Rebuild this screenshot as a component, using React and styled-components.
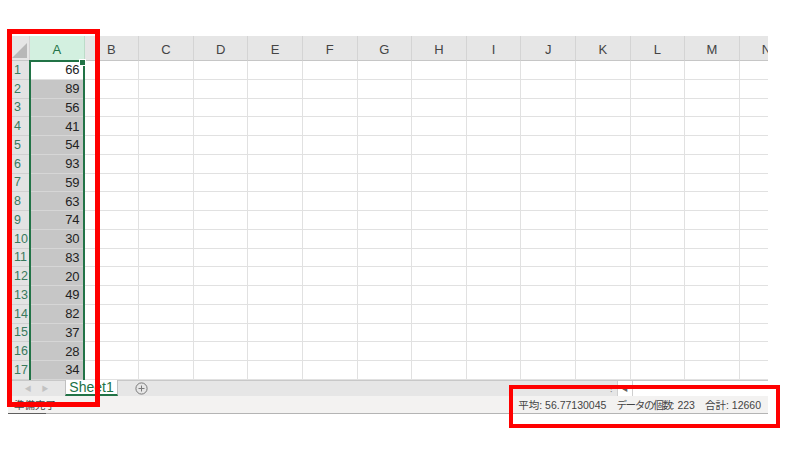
import React from "react";
import styled, { createGlobalStyle } from "styled-components";

const GlobalStyle = createGlobalStyle`
  html, body {
    margin: 0;
    padding: 0;
    background: #ffffff;
  }
  body {
    font-family: "Liberation Sans", "Noto Sans CJK JP", sans-serif;
    color: #222222;
  }
`;

const COLS = ["A", "B", "C", "D", "E", "F", "G", "H", "I", "J", "K", "L", "M", "N"];
const VALUES = [66, 89, 56, 41, 54, 93, 59, 63, 74, 30, 83, 20, 49, 82, 37, 28, 34];
const COL_W = 54.6;
const ROW_H = 18.76;

const Page = styled.div`
  position: relative;
  width: 800px;
  height: 450px;
  padding: 36px 0 0 8px;
  box-sizing: border-box;
`;

const Workbook = styled.div`
  width: 760px;
  display: flex;
  flex-direction: column;
`;

const Grid = styled.div`
  position: relative;
  display: grid;
  grid-template-columns: 22px repeat(14, ${COL_W}px);
  grid-template-rows: 25px repeat(17, ${ROW_H}px);
  width: 760px;
  overflow: hidden;
`;

const Corner = styled.div`
  background: #e6e6e6;
  border-right: 1px solid #d4d4d4;
  border-bottom: 1px solid #c6c6c6;
  display: flex;
  align-items: flex-end;
  justify-content: flex-end;
  padding: 0 2px 2px 0;
  box-sizing: border-box;
`;

const CornerTriangle = styled.div`
  width: 0;
  height: 0;
  border-left: 15px solid transparent;
  border-bottom: 15px solid #b8b8b8;
`;

const ColHead = styled.div`
  background: ${({ active }) => (active ? "#d3f0e0" : "#e6e6e6")};
  color: ${({ active }) => (active ? "#217346" : "#444444")};
  border-right: 1px solid ${({ active }) => (active ? "#bcdcc9" : "#d4d4d4")};
  border-bottom: 1px solid ${({ active }) => (active ? "#9fcbb0" : "#c6c6c6")};
  box-sizing: border-box;
  display: flex;
  align-items: center;
  justify-content: center;
  font-size: 13px;
  padding-top: 3px;
`;

const RowHead = styled.div`
  background: #e3e3e3;
  color: #3a7a5e;
  border-right: 1px solid #c6c6c6;
  border-bottom: 1px solid #d0d0d0;
  box-sizing: border-box;
  display: flex;
  align-items: center;
  padding-left: 6px;
  font-size: 12.5px;
  overflow: hidden;
`;

const Cell = styled.div`
  background: ${({ selected }) => (selected ? "#c6c6c6" : "#ffffff")};
  border-right: 1px solid #e1e1e1;
  border-bottom: 1px solid ${({ selected }) => (selected ? "#d6d6d6" : "#e1e1e1")};
  box-sizing: border-box;
  display: flex;
  align-items: center;
  justify-content: flex-end;
  padding-right: 4px;
  font-size: 13px;
  color: #222222;
`;

const Selection = styled.div`
  position: absolute;
  left: 21px;
  top: 24px;
  width: ${COL_W + 1}px;
  height: ${ROW_H * 17 + 4}px;
  border: 2px solid #217346;
  box-sizing: border-box;
  pointer-events: none;
`;

const FillHandle = styled.div`
  position: absolute;
  right: -3px;
  top: -3px;
  width: 5px;
  height: 5px;
  background: #217346;
  border: 1px solid #ffffff;
`;

const TabBar = styled.div`
  height: 15px;
  display: flex;
  align-items: stretch;
  background: #e6e6e6;
  border-top: 1px solid #c8c8c8;
`;

const NavArrows = styled.div`
  width: 57px;
  display: flex;
  align-items: center;
  justify-content: center;
  gap: 10px;
  color: #c2c2c2;
  font-size: 7px;
`;

const SheetTab = styled.div`
  width: 51px;
  background: #ffffff;
  color: #217346;
  font-size: 14px;
  display: flex;
  align-items: center;
  justify-content: center;
  border-left: 1px solid #c0c0c0;
  border-right: 1px solid #c0c0c0;
  border-bottom: 2px solid #217346;
  margin-top: -1px;
  line-height: 1;
`;

const AddButton = styled.div`
  width: 46px;
  display: flex;
  align-items: center;
  justify-content: center;
`;

const Spacer = styled.div`
  flex: 1;
`;

const SplitDots = styled.div`
  width: 12px;
  color: #8a8a8a;
  font-size: 9px;
  display: flex;
  align-items: center;
  justify-content: center;
`;

const ScrollTrack = styled.div`
  width: 150px;
  display: flex;
  background: #ffffff;
  border-left: 1px solid #cfcfcf;
`;

const ScrollArrow = styled.div`
  width: 14px;
  border-right: 1px solid #cfcfcf;
  display: flex;
  align-items: center;
  justify-content: center;
  color: #606060;
  font-size: 6px;
`;

const StatusBar = styled.div`
  height: 17px;
  display: flex;
  align-items: center;
  justify-content: space-between;
  background: #f3f2f1;
  border-bottom: 1px solid #b4b4b4;
  position: relative;
  font-size: 10.5px;
  color: #444444;
  padding: 0 7px 0 6px;
`;

const ReadyMark = styled.div`
  position: absolute;
  left: 0;
  bottom: -1px;
  width: 38px;
  height: 1px;
  background: #5f5f5f;
`;

const Stats = styled.div`
  display: flex;
  gap: 10px;
`;

const Stat = styled.span`
  white-space: pre;
`;

const StatLabel = styled.span`
  font-family: "Noto Sans CJK JP", sans-serif;
  letter-spacing: ${({ tight }) => (tight ? "-1.3px" : "0")};
`;

const Annotation = styled.div`
  position: absolute;
  border: ${({ w }) => w}px solid #ff0000;
  box-sizing: border-box;
  pointer-events: none;
`;

const PlusIcon = () => (
  <svg width="13" height="13" viewBox="0 0 13 13">
    <circle cx="6.5" cy="6.5" r="5.6" fill="none" stroke="#7a7a7a" strokeWidth="1" />
    <path d="M6.5 3.5v6M3.5 6.5h6" stroke="#7a7a7a" strokeWidth="1" />
  </svg>
);

export default function App() {
  return (
    <>
      <GlobalStyle />
      <Page>
        <Workbook>
          <Grid>
            <Corner>
              <CornerTriangle />
            </Corner>
            {COLS.map((c) => (
              <ColHead key={c} active={c === "A"}>
                {c}
              </ColHead>
            ))}
            {VALUES.map((v, i) => (
              <React.Fragment key={i}>
                <RowHead>{i + 1}</RowHead>
                <Cell selected={i > 0}>{v}</Cell>
                {COLS.slice(1).map((c) => (
                  <Cell key={c} />
                ))}
              </React.Fragment>
            ))}
            <Selection>
              <FillHandle />
            </Selection>
          </Grid>
          <TabBar>
            <NavArrows>
              <span>◀</span>
              <span>▶</span>
            </NavArrows>
            <SheetTab>Sheet1</SheetTab>
            <AddButton>
              <PlusIcon />
            </AddButton>
            <Spacer />
            <SplitDots>⁝</SplitDots>
            <ScrollTrack>
              <ScrollArrow>◀</ScrollArrow>
            </ScrollTrack>
          </TabBar>
          <StatusBar>
            <StatLabel>準備完了</StatLabel>
            <Stats>
              <Stat>
                <StatLabel>平均</StatLabel>: 56.77130045
              </Stat>
              <Stat>
                <StatLabel tight>データの個数</StatLabel>: 223
              </Stat>
              <Stat>
                <StatLabel>合計</StatLabel>: 12660
              </Stat>
            </Stats>
            <ReadyMark />
          </StatusBar>
        </Workbook>
        <Annotation w={5} style={{ left: 7, top: 29, width: 93, height: 378 }} />
        <Annotation w={4} style={{ left: 509, top: 385, width: 271, height: 43 }} />
      </Page>
    </>
  );
}
